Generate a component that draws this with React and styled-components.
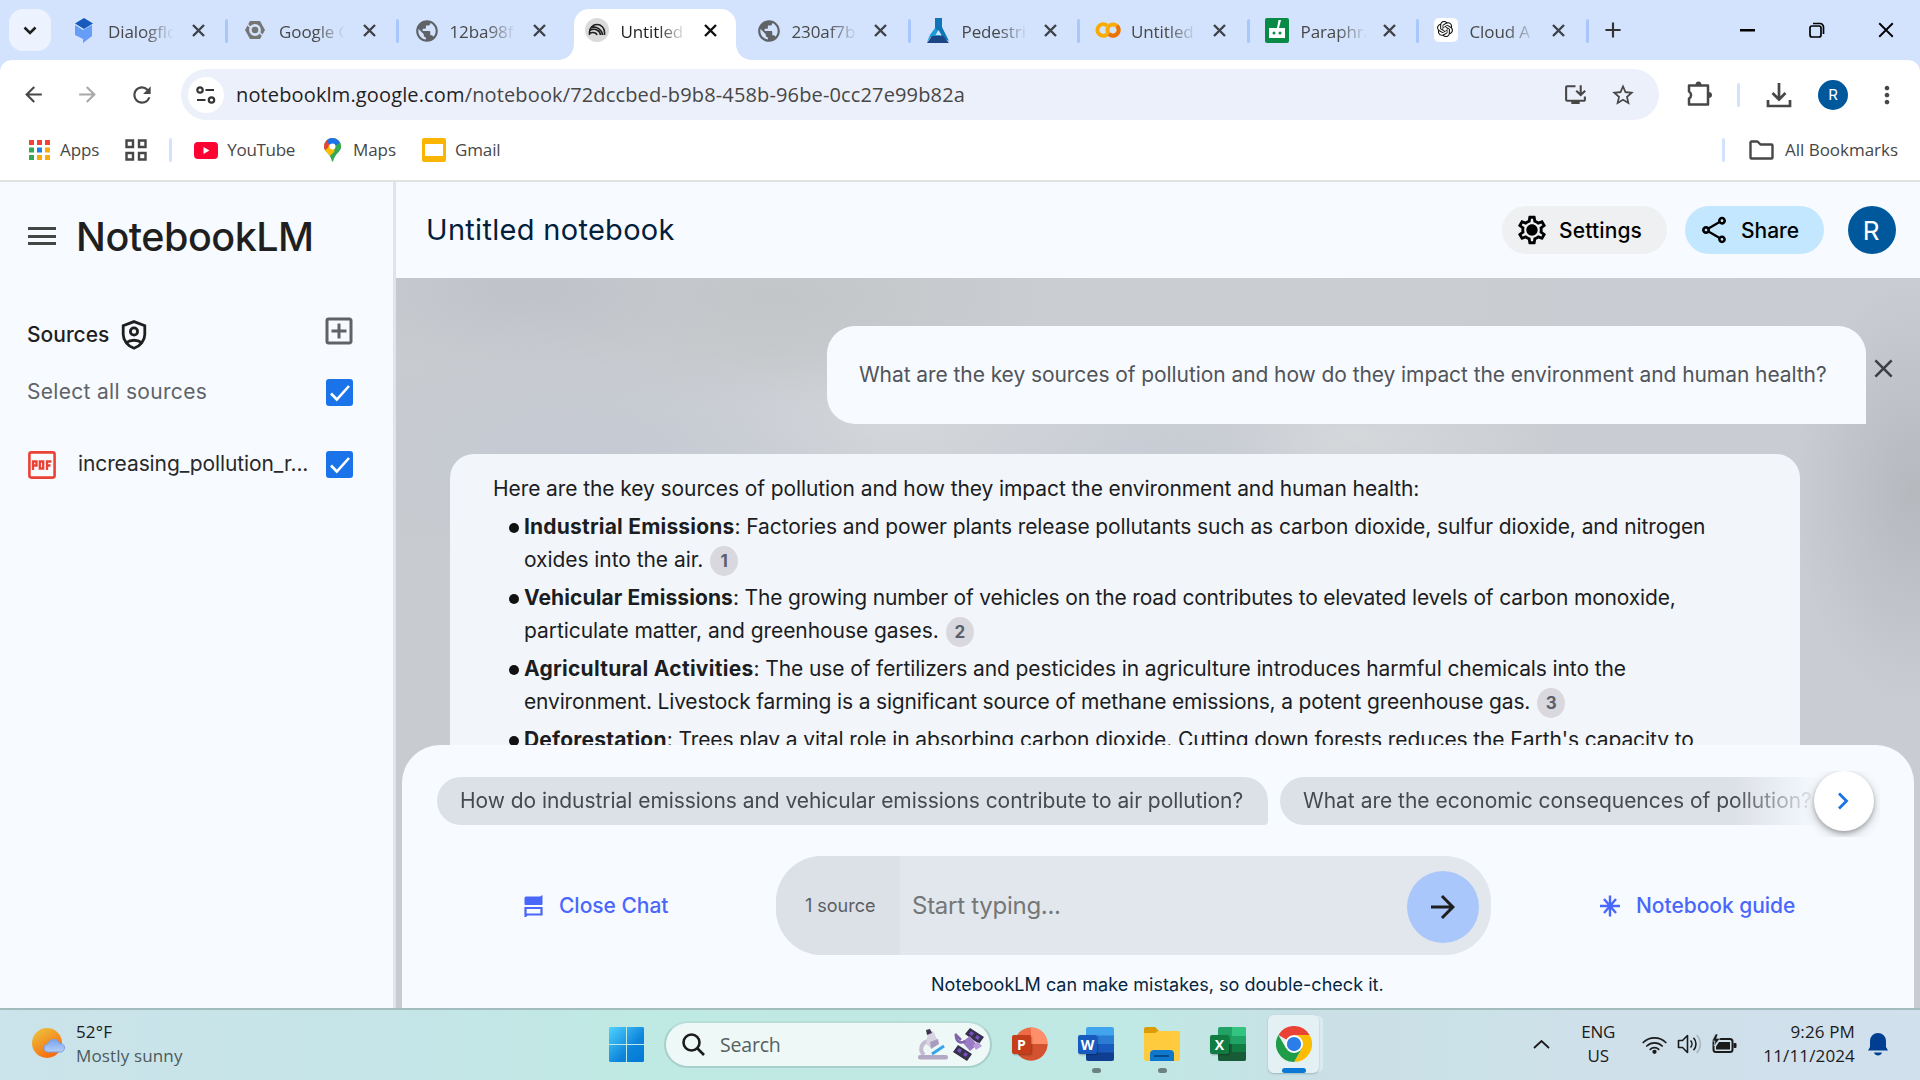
import React from "react";
import styled, { createGlobalStyle, css } from "styled-components";
import {
  MdClose, MdArrowBack, MdArrowForward, MdRefresh, MdStarBorder, MdMoreVert,
  MdInstallDesktop, MdPublic, MdOutlineSettings, MdOutlineAddBox,
  MdOutlineShare, MdAdd,
} from "react-icons/md";
import { SiOpenai } from "react-icons/si";

const ui = `"Open Sans", "Noto Sans", sans-serif`;
const product = `Inter, Roboto, "Liberation Sans", sans-serif`;

const GlobalStyle = createGlobalStyle`
  * { box-sizing: border-box; }
  html, body { margin: 0; padding: 0; overflow: hidden; }
  body { font-family: ${product}; color: #1f1f1f; }
  svg { display: block; flex: none; }
  p, h1, h2, ul { margin: 0; padding: 0; font-weight: 400; }
`;

const Screen = styled.div`
  width: 1920px;
  height: 1080px;
  display: flex;
  flex-direction: column;
  background: #d3e3fd;
  overflow: hidden;
`;

/* ---------- Tab strip ---------- */
const TabStrip = styled.div`
  display: flex;
  height: 60px;
  flex: none;
  padding-left: 9px;
  font-family: ${ui};
`;
const TabSearch = styled.button`
  width: 42px;
  height: 42px;
  margin: 9px 5px 0 0;
  border: 0;
  padding: 0;
  border-radius: 14px;
  background: #ecf3fe;
  display: grid;
  place-items: center;
`;
const Tab = styled.div`
  position: relative;
  flex: none;
  width: ${(p) => p.$w}px;
  height: 60px;
  display: flex;
  align-items: center;
  padding-left: 16px;
  color: ${(p) => (p.$active ? "#1f1f1f" : "#474747")};
  ${(p) =>
    p.$divider &&
    css`
      &::after {
        content: "";
        position: absolute;
        right: -1px;
        top: 19px;
        width: 3px;
        height: 24px;
        border-radius: 2px;
        background: #a8c7fa;
      }
    `}
`;
const ActiveShape = styled.div`
  position: absolute;
  left: 5px;
  right: 4px;
  top: 9px;
  bottom: 0;
  background: #fff;
  border-radius: 15px 15px 0 0;
  &::before,
  &::after {
    content: "";
    position: absolute;
    bottom: 0;
    width: 15px;
    height: 15px;
  }
  &::before {
    left: -15px;
    background: radial-gradient(circle at 0 0, transparent 14.5px, #fff 15px);
  }
  &::after {
    right: -15px;
    background: radial-gradient(circle at 100% 0, transparent 14.5px, #fff 15px);
  }
`;
const Favicon = styled.span`
  position: relative;
  width: 24px;
  height: 24px;
  display: grid;
  place-items: center;
`;
const TabTitle = styled.span`
  position: relative;
  width: 80px;
  margin: 2px 0 0 12px;
  white-space: nowrap;
  font-size: 17px;
  letter-spacing: -0.1px;
  mask-image: linear-gradient(90deg, #000 36px, transparent 66px);
`;
const TabClose = styled.span`
  position: relative;
  margin-left: ${(p) => (p.$wide ? 3.5 : 2)}px;
`;
const NewTab = styled.span`
  margin: 17px 0 0 12px;
  color: #333;
`;
const WindowControls = styled.div`
  margin-left: auto;
  height: 60px;
  display: flex;
  align-items: center;
  > * {
    width: 69px;
    display: grid;
    place-items: center;
  }
`;

/* ---------- Toolbar ---------- */
const Toolbar = styled.div`
  height: 60px;
  flex: none;
  display: flex;
  align-items: center;
  padding: 9px 19px 0 21px;
  border-radius: 12px 12px 0 0;
  background: #fff;
  color: #474747;
  font-family: ${ui};
`;
const NavButton = styled.span`
  flex: none;
  width: 24px;
  margin-right: 30px;
  color: ${(p) => (p.$dim ? "#a8a8a8" : "#474747")};
`;
const Omnibox = styled.div`
  flex: none;
  width: 1478px;
  height: 51px;
  margin-left: -2px;
  border-radius: 26px;
  background: #ecf0fa;
  display: flex;
  align-items: center;
  padding: 0 23px 0 7px;
`;
const SiteInfo = styled.span`
  width: 36px;
  height: 36px;
  border-radius: 50%;
  background: #fff;
  display: grid;
  place-items: center;
`;
const Url = styled.span`
  flex: 1;
  margin-left: 12px;
  font-size: 20px;
  letter-spacing: 0.14px;
  color: #474747;
  b {
    font-weight: 400;
    color: #1f1f1f;
  }
`;
const OmniIcon = styled.span`
  margin-left: 22px;
`;
const ToolbarEnd = styled.div`
  flex: 1;
  display: flex;
  align-items: center;
  justify-content: flex-end;
`;
const Divider = styled.span`
  width: 3px;
  height: 24px;
  border-radius: 2px;
  background: #d3e3fd;
  margin: 0 ${(p) => p.$r}px 0 ${(p) => p.$l}px;
`;
const ChromeAvatar = styled.span`
  width: 30px;
  height: 30px;
  margin: 0 25px 0 26px;
  border-radius: 50%;
  background: #00589c;
  color: #fff;
  font: 15px ${product};
  display: grid;
  place-items: center;
`;

/* ---------- Bookmarks ---------- */
const BookmarkBar = styled.div`
  height: 62px;
  flex: none;
  display: flex;
  align-items: center;
  padding: 0 22px 0 29px;
  border-bottom: 2px solid #e1e3e1;
  background: #fff;
  color: #474747;
  font-family: ${ui};
  font-size: 17px;
`;
const Bookmark = styled.span`
  display: flex;
  align-items: center;
  gap: ${(p) => p.$gap || 9}px;
  margin-right: ${(p) => p.$mr || 0}px;
  letter-spacing: ${(p) => p.$ls || -0.1}px;
  > span {
    margin-top: -2px;
  }
`;
const Grow = styled.span`
  flex: 1;
`;

/* ---------- App ---------- */
const AppBody = styled.div`
  display: flex;
  height: 826px;
  flex: none;
  background: #f7fbff;
`;
const Sidebar = styled.aside`
  width: 396px;
  flex: none;
  border-right: 3px solid #dfe4eb;
  padding: 0 40px 0 28px;
`;
const BrandRow = styled.div`
  height: 108px;
  display: flex;
  align-items: center;
`;
const Burger = styled.span`
  width: 28px;
  height: 18px;
  margin-right: 20px;
  display: flex;
  flex-direction: column;
  justify-content: space-between;
  i {
    height: 3px;
    background: #444746;
  }
`;
const Brand = styled.h1`
  padding-top: 1px;
  font-size: 39.5px;
  font-weight: 500;
  letter-spacing: -0.5px;
`;
const SourcesRow = styled.div`
  height: 86px;
  display: flex;
  align-items: center;
  justify-content: space-between;
  color: #5f6368;
  > svg {
    margin: -4px -4px 0 0;
  }
`;
const SourcesTitle = styled.h2`
  display: flex;
  align-items: center;
  gap: 12px;
  margin: 3px 0 0 -1px;
  font-size: 21px;
  font-weight: 500;
  letter-spacing: 0;
  color: #1f1f1f;
`;
const SourceRow = styled.label`
  height: 33px;
  margin-bottom: 39px;
  display: flex;
  align-items: center;
  justify-content: space-between;
  font-size: 21px;
`;
const SelectAll = styled.span`
  margin: -2px 0 0 -1px;
  letter-spacing: 0.3px;
  color: #5f6368;
`;
const FileName = styled.span`
  flex: 1;
  margin: -2px 0 0 22px;
  letter-spacing: -0.11px;
  color: #28292a;
`;
const CheckBox = styled.span`
  width: 27px;
  height: 27px;
  border-radius: 3px;
  background: #1a73e8;
  display: grid;
  place-items: center;
`;

const Main = styled.main`
  flex: 1;
  display: flex;
  flex-direction: column;
`;
const Header = styled.header`
  height: 96px;
  flex: none;
  display: flex;
  align-items: center;
  padding: 0 24px 0 30px;
`;
const NotebookTitle = styled.h2`
  flex: 1;
  padding-bottom: 1px;
  font-size: 29px;
  letter-spacing: 0.3px;
  color: #041e3c;
`;
const PillButton = styled.button`
  height: 48px;
  width: ${(p) => p.$w}px;
  margin-right: ${(p) => p.$mr}px;
  padding: 0 0 0 ${(p) => p.$pl}px;
  border: 0;
  border-radius: 24px;
  background: ${(p) => p.$bg};
  color: #000;
  display: flex;
  align-items: center;
  gap: ${(p) => p.$gap}px;
  font: 500 21px ${product};
  letter-spacing: ${(p) => p.$ls}px;
`;
const Avatar = styled.span`
  width: 48px;
  height: 48px;
  padding-right: 2px;
  border-radius: 50%;
  background: #00589c;
  color: #fff;
  font-size: 26px;
  display: grid;
  place-items: center;
`;

const ChatPanel = styled.section`
  height: 730px;
  display: flex;
  flex-direction: column;
  background:
    radial-gradient(ellipse 120px 210px at 1518px 215px, #b5b8bd 0%, rgba(181, 184, 189, 0) 100%),
    radial-gradient(ellipse 200px 90px at 130px 10px, #bfc2c9 0%, rgba(191, 194, 201, 0) 100%),
    radial-gradient(ellipse 260px 110px at 380px 20px, #c3c6c8 0%, rgba(195, 198, 200, 0) 100%),
    radial-gradient(ellipse 300px 110px at 190px 175px, #c5c9d3 0%, rgba(197, 201, 211, 0) 100%),
    radial-gradient(ellipse 330px 90px at 500px 150px, #d3d6da 0%, rgba(211, 214, 218, 0) 100%),
    radial-gradient(ellipse 200px 60px at 720px 165px, #c5c9d3 0%, rgba(197, 201, 211, 0) 100%),
    radial-gradient(ellipse 200px 60px at 960px 160px, #d5d8db 0%, rgba(213, 216, 219, 0) 100%),
    linear-gradient(90deg, #c8cbcf, #caced2 50%, #c9ccd2);
`;
const Conversation = styled.div`
  height: 467px;
  overflow: hidden;
  padding: 48px 0 0 54px;
`;
const QuestionRow = styled.div`
  display: flex;
  justify-content: flex-end;
  padding-right: 26px;
  margin-bottom: 30px;
  color: #3c4043;
  > svg {
    margin: 27px -5px 0 2px;
  }
`;
const Question = styled.p`
  width: 1039px;
  height: 98px;
  padding: 0 0 1px 32px;
  border-radius: 28px 28px 0 28px;
  background: #f7fbff;
  display: flex;
  align-items: center;
  font-size: 21px;
  letter-spacing: -0.075px;
  white-space: nowrap;
  color: #51545a;
`;
const Answer = styled.article`
  width: 1350px;
  padding: 18px 0 0 43px;
  border-radius: 24px 24px 0 0;
  background: #f2f6fb;
  font-size: 21px;
  line-height: 33px;
  letter-spacing: -0.09px;
  color: #1c1d1f;
  white-space: nowrap;
`;
const Bullets = styled.ul`
  list-style: none;
`;
const Bullet = styled.li`
  display: flex;
  margin-top: 5px;
  padding-left: 16px;
  &::before {
    content: "";
    flex: none;
    width: 10px;
    height: 10px;
    margin: 13px 5px 0 0;
    border-radius: 50%;
    background: #111;
  }
`;
const Line = styled.div`
  height: 33px;
  letter-spacing: ${(p) => p.$ls || -0.105}px;
  b {
    font-weight: 700;
    letter-spacing: ${(p) => p.$bls || 0.2}px;
  }
`;
const Cite = styled.span`
  display: inline-grid;
  place-items: center;
  vertical-align: middle;
  width: 28px;
  height: 30px;
  margin-left: 7px;
  border-radius: 50%;
  background: #d8d8de;
  color: #5b5e6b;
  font-size: 17px;
  font-weight: 700;
  line-height: 30px;
  letter-spacing: 0;
`;

/* ---------- Composer ---------- */
const Composer = styled.div`
  flex: 1;
  margin: 0 6px;
  padding: 26px 0 0 35px;
  border-radius: 38px 38px 0 0;
  background: #f7fbff;
`;
const SuggestionRow = styled.div`
  position: relative;
  width: 1443px;
  height: 66px;
  overflow: hidden;
  padding-top: 6px;
`;
const Suggestions = styled.div`
  display: flex;
  gap: 12px;
  mask-image: linear-gradient(90deg, #000 0, #000 1296px, rgba(0, 0, 0, 0) 1385px);
`;
const Suggestion = styled.button`
  flex: none;
  height: 48px;
  width: ${(p) => p.$w}px;
  padding: 0 0 1px 23px;
  border: 0;
  border-radius: 24px 24px 4px 24px;
  background: #dce0e7;
  color: #464a4f;
  text-align: left;
  white-space: nowrap;
  font: 21px ${product};
  letter-spacing: ${(p) => p.$ls}px;
`;
const NextButton = styled.button`
  position: absolute;
  right: 6px;
  top: 0;
  width: 60px;
  height: 60px;
  padding: 0 2px 0 0;
  border: 0;
  border-radius: 50%;
  background: #fff;
  display: grid;
  place-items: center;
  box-shadow: 0 2px 4px rgba(0, 0, 0, 0.25), 0 4px 12px rgba(0, 0, 0, 0.2);
`;
const InputRow = styled.div`
  margin-top: 19px;
  height: 99px;
  display: flex;
  align-items: center;
`;
const TextAction = styled.span`
  display: flex;
  align-items: center;
  gap: ${(p) => p.$gap}px;
  margin-left: ${(p) => p.$ml}px;
  width: ${(p) => p.$w}px;
  font-size: 21px;
  font-weight: 500;
  letter-spacing: -0.03px;
  white-space: nowrap;
  color: #4a67fb;
`;
const InputBox = styled.div`
  width: 715px;
  height: 99px;
  border-radius: 46px;
  overflow: hidden;
  background: #e2e6ed;
  display: flex;
  align-items: center;
`;
const SourceCount = styled.span`
  width: 124px;
  height: 99px;
  padding-left: 29px;
  background: #dce0e7;
  display: flex;
  align-items: center;
  font-size: 18px;
  letter-spacing: -0.02px;
  color: #5a5e63;
`;
const Placeholder = styled.span`
  flex: 1;
  margin: 0 0 0 12px;
  font-size: 24px;
  letter-spacing: -0.27px;
  color: #747775;
`;
const SendButton = styled.span`
  width: 72px;
  height: 72px;
  margin: 3px 12px 0 0;
  border-radius: 50%;
  background: #a9c7fa;
  color: #1f1f1f;
  display: grid;
  place-items: center;
`;
const Disclaimer = styled.p`
  margin: 19px 0 0 494px;
  font-size: 18px;
  letter-spacing: 0.03px;
  color: #06263f;
`;

/* ---------- Taskbar ---------- */
const Taskbar = styled.footer`
  height: 72px;
  flex: none;
  display: flex;
  align-items: center;
  padding-bottom: 2px;
  border-top: 2px solid #a2bcbe;
  background: linear-gradient(90deg, #cbe3ea 0, #c5e5e8 400px, #bfe9e3 640px, #c0e8e4 1150px, #cadfe6 1330px, #cbe2e8 1470px, #cfe0ea 1600px, #d0e0ed 1920px);
  font-family: ${ui};
  font-size: 17px;
  color: #1b1b1b;
`;
const Weather = styled.div`
  width: 577px;
  margin-left: 32px;
  display: flex;
  align-items: center;
  gap: 11px;
  line-height: 24px;
  letter-spacing: 0.15px;
  small {
    display: block;
    font-size: 17px;
    color: #4c5a5d;
  }
`;
const SearchBox = styled.div`
  width: 328px;
  height: 47px;
  margin: 1px 20px 0 20px;
  padding: 0 5px 0 16px;
  border: 2px solid #a9cfca;
  border-top-color: #b9ddd8;
  border-radius: 24px;
  background: #edf8f7;
  display: flex;
  align-items: center;
  font-size: 19.5px;
  letter-spacing: -0.2px;
  color: #55605f;
  > span {
    flex: 1;
    margin-left: 15px;
  }
`;
const Launcher = styled.div`
  position: relative;
  width: 66px;
  height: 70px;
  display: flex;
  align-items: center;
  &::after {
    content: "";
    display: ${(p) => (p.$running ? "block" : "none")};
    position: absolute;
    left: 14px;
    bottom: 6px;
    width: 9px;
    height: 5px;
    border-radius: 3px;
    background: #6d8382;
  }
`;
const ActiveApp = styled.div`
  position: relative;
  width: 51px;
  height: 58px;
  margin-left: -8px;
  border-radius: 6px;
  background: #e4f1f4;
  box-shadow: 0 1px 2px rgba(90, 120, 130, 0.4), 5px 0 0 -1px #dcebef;
  display: grid;
  place-items: center;
  &::after {
    content: "";
    position: absolute;
    left: 14px;
    bottom: 0;
    width: 24px;
    height: 5px;
    border-radius: 3px;
    background: #0a78d4;
  }
`;
const Tray = styled.div`
  flex: 1;
  display: flex;
  align-items: center;
  justify-content: flex-end;
  padding-right: 32px;
`;
const TrayIcons = styled.div`
  display: flex;
  align-items: center;
  gap: 10px;
`;
const TrayText = styled.div`
  text-align: ${(p) => p.$align};
  line-height: 24px;
  margin: 0 ${(p) => p.$r}px 0 ${(p) => p.$l}px;
  letter-spacing: ${(p) => p.$ls || 0}px;
`;

/* ---------- Icons ---------- */
const Cross = ({ s = 13, w = 2.4, c = "#3a3a3a" }) => (
  <svg width={s} height={s} viewBox="0 0 13 13"><path d="M1 1l11 11M12 1L1 12" stroke={c} strokeWidth={w} /></svg>
);
const Globe = () => <MdPublic size={26} color="#5f6368" />;
const Dialogflow = () => (
  <svg width="20" height="26" viewBox="0 0 20 26">
    <path d="M1 7v10l8 4v4l9-7V7l-9 5z" fill="#669df6" />
    <path d="M10 0l9 5.500-9 5.500-9-5.500z" fill="#185abc" />
  </svg>
);
const CloudHex = () => (
  <svg width="22" height="22" viewBox="0 0 22 22">
    <path d="M6 2h10l5 9-5 9H6l-5-9z" fill="#757575" />
    <circle cx="11" cy="11" r="4.600" fill="#757575" stroke="#d3e3fd" strokeWidth="2.600" />
    <path d="M3 5l4 4M19 17l-4-4" stroke="#d3e3fd" strokeWidth="1.500" />
  </svg>
);
const NotebookIcon = () => (
  <svg width="24" height="24" viewBox="0 0 24 24" fill="none" stroke="#1f1f1f" strokeWidth="1.600">
    <circle cx="12" cy="12" r="12" fill="#dadada" stroke="none" />
    <path d="M4.500 17v-3a7.500 7.500 0 0115 0v3M5 12.200c5-2.400 10 .2 10.500 4.800M5 15c3.800-1.300 6.500 0 7 2M6.500 9.500c5-1.500 10.500 2 11 7.500" />
  </svg>
);
const Flask = () => (
  <svg width="24" height="25" viewBox="0 0 24 25">
    <path d="M9 0h7v9l-4 4 3 6H5l-4 5 3-7 5-7z" fill="#1a9ad7" />
    <path d="M9 0h7v9l7 14-7-3-4-7-3-3z" fill="#0f74b8" />
    <path d="M9.500 17l3-5 3 5z" fill="#d3e3fd" />
    <path d="M6 18h11l6 7H1z" fill="#1c4585" />
  </svg>
);
const Colab = () => (
  <svg width="26" height="16" viewBox="0 0 26 16" fill="none" strokeWidth="4">
    <path d="M12 3.600A5.800 5.800 0 1012 12.400" stroke="#f9ab00" />
    <circle cx="18" cy="8" r="5.600" stroke="#f9ab00" />
    <path d="M14 12a5.600 5.600 0 008-8" stroke="#e8710a" />
  </svg>
);
const Robot = () => (
  <svg width="24" height="25" viewBox="0 0 24 25">
    <rect width="24" height="25" rx="2" fill="#0a8a47" />
    <path d="M12 10l1.500-8h2.500l-2 8h6v10H4V10z" fill="#fff" />
    <circle cx="9" cy="15" r="1.500" fill="#0a8a47" /><circle cx="15" cy="15" r="1.500" fill="#0a8a47" />
  </svg>
);
const OpenAi = () => (
  <svg width="24" height="24" viewBox="0 0 24 24">
    <rect width="24" height="24" rx="5" fill="#fff" />
    <SiOpenai x="3" y="3" width="18" height="18" color="#111" />
  </svg>
);
const Tune = () => (
  <svg width="20" height="20" viewBox="0 0 20 20" fill="none" stroke="#333" strokeWidth="2.200">
    <circle cx="4" cy="5" r="2.700" /><path d="M9.500 5H18M1 15h8.500" /><circle cx="15.500" cy="15" r="2.700" />
  </svg>
);
const Puzzle = () => (
  <svg width="28" height="28" viewBox="0 0 28 28" fill="none" stroke="#474747" strokeWidth="2.500" strokeLinejoin="round">
    <path d="M4 4.500h19v19H4v-6a4 4 0 000-7z" />
    <path d="M10.500 4a3 3.500 0 016 0zM23.500 11a3.500 3 0 010 6z" fill="#474747" stroke="none" />
  </svg>
);
const Download = () => (
  <svg width="26" height="26" viewBox="0 0 26 26" fill="none" stroke="#474747" strokeWidth="2.700">
    <path d="M13 1v16M6.500 11l6.500 6.500 6.500-6.500M2 18v6h22v-6" />
  </svg>
);
const AppsDots = () => (
  <svg width="21" height="20" viewBox="0 0 21 20">
    {["#f44336", "#f44336", "#f44336", "#34a853", "#1a82e2", "#fbab05", "#34a853", "#fbab05", "#fbab05"].map((c, i) => (
      <rect key={i} x={(i % 3) * 8} y={Math.floor(i / 3) * 7.5} width="5" height="5" fill={c} />
    ))}
  </svg>
);
const FourSquares = () => (
  <svg width="22" height="22" viewBox="0 0 22 22" fill="none" stroke="#474747" strokeWidth="2.400">
    <path d="M1.500 1.500h6.500v6.500H1.500zM14 1.500h6.500v6.500H14zM1.500 14h6.500v6.500H1.500zM14 14h6.500v6.500H14z" />
  </svg>
);
const YouTube = () => (
  <svg width="24" height="17" viewBox="0 0 24 17"><rect width="24" height="17" rx="4" fill="#ff0033" /><path d="M9.500 5l6 3.500-6 3.500z" fill="#fff" /></svg>
);
const MapsPin = () => (
  <svg width="17" height="24" viewBox="0 0 17 24">
    <clipPath id="pin"><path d="M8.500 0A8.300 8.300 0 000 8.400C0 14 6.500 15 8 23.500h1C10.500 15 17 14 17 8.400A8.300 8.300 0 008.500 0z" /></clipPath>
    <g clipPath="url(#pin)">
      <rect width="17" height="24" fill="#34a853" />
      <path d="M-2 14L12-4 20 4 4 20z" fill="#fbbc04" />
      <path d="M-1-1h8L4 10-2 14z" fill="#ea4335" />
      <path d="M3 0h10l4 5-7 6-7-7z" fill="#1a73e8" />
      <path d="M11 8L17 4v8l-8 12z" fill="#34a853" />
    </g>
    <circle cx="8.500" cy="8.500" r="3" fill="#fff" />
  </svg>
);
const Slides = () => (
  <svg width="24" height="24" viewBox="0 0 24 24"><rect width="24" height="24" rx="2" fill="#f9b500" /><path d="M3 6h18v12H3z" fill="#fff" /></svg>
);
const Folder = () => (
  <svg width="25" height="20" viewBox="0 0 25 20" fill="none" stroke="#474747" strokeWidth="2.400" strokeLinejoin="round">
    <path d="M1.500 2.500a1 1 0 011-1h6l3 3h11a1 1 0 011 1v12a1 1 0 01-1 1h-20a1 1 0 01-1-1z" />
  </svg>
);
const ShieldPerson = () => (
  <svg width="26" height="30" viewBox="0 0 26 30" fill="none" stroke="#1f1f1f" strokeWidth="2.800">
    <path d="M13 1.600l10.800 4v8.900c0 6-4.600 11.600-10.800 13.800C6.800 26.100 2.200 20.500 2.200 14.500V5.600z" />
    <circle cx="13" cy="11.500" r="3.600" /><path d="M5.500 22.500c4-3 11-3 15 0" />
  </svg>
);
const Pdf = () => (
  <svg width="28" height="28" viewBox="0 0 28 28" fill="none" stroke="#ea4335" strokeWidth="2.600">
    <rect x="1.400" y="1.400" width="25.200" height="25.200" rx="2" />
    <path strokeWidth="2.300" d="M5 19v-8.500h3.500v4H5M11.800 10.500h3.400v7h-3.400zM19 19v-8.500h4.500M19 14.500h3.500" />
  </svg>
);
const Check = () => (
  <svg width="22" height="20" viewBox="0 0 22 20" fill="none" stroke="#fff" strokeWidth="2.600"><path d="M2 10.500l5.800 6L20 3" /></svg>
);
const Gear = () => (
  <svg width="34" height="34" viewBox="0 0 34 34">
    <MdOutlineSettings width="34" height="34" size={34} />
    <circle cx="17" cy="17" r="5" />
  </svg>
);
const CloseChatIcon = () => (
  <svg width="19" height="22" viewBox="0 0 19 22">
    <path d="M3 1.500h13L18.500 0v9a1 1 0 01-1 1h-16a1 1 0 01-1-1V3a1.500 1.500 0 011.500-1.500z" fill="#4a67fb" />
    <path d="M1.500 13h16v6.500H3L1.500 21z" fill="none" stroke="#4a67fb" strokeWidth="2.200" />
  </svg>
);
const Asterisk = () => (
  <svg width="20" height="22" viewBox="0 0 20 22" stroke="#4a67fb" strokeWidth="2.400"><path d="M10 .5v21M0 11h20M4 4l12 14M16 4L4 18" /></svg>
);
const WeatherIcon = () => (
  <svg width="33" height="32" viewBox="0 0 33 32">
    <defs>
      <linearGradient id="sun" x1="0.200" y1="0" x2="0.800" y2="1"><stop offset="0" stopColor="#edc13c" /><stop offset="1" stopColor="#f8610a" /></linearGradient>
      <linearGradient id="cl" x1="0" y1="0" x2="0" y2="1"><stop offset="0" stopColor="#7aa4ee" /><stop offset="1" stopColor="#b5d0f8" /></linearGradient>
    </defs>
    <circle cx="15" cy="15" r="15" fill="url(#sun)" />
    <path d="M16 24a4 4 0 010-8 6 6 0 0111.500-.5A4.300 4.300 0 0129 24z" fill="url(#cl)" stroke="#7d9fe0" />
  </svg>
);
const WindowsLogo = () => (
  <svg width="35" height="35" viewBox="0 0 35 35">
    <defs><linearGradient id="win" x1="0" y1="0" x2="1" y2="1"><stop offset="0" stopColor="#4fd3ff" /><stop offset="0.600" stopColor="#0f86dc" /><stop offset="1" stopColor="#0078d4" /></linearGradient></defs>
    <path d="M1 0h16v17H0V1zM18 0h16l1 1v16H18zM0 18h17v17H1l-1-1zM18 18h17v16l-1 1H18z" fill="url(#win)" />
  </svg>
);
const Magnifier = () => (
  <svg width="23" height="23" viewBox="0 0 23 23" fill="none" stroke="#1b1b1b" strokeWidth="2.600"><circle cx="9.500" cy="9.500" r="8" /><path d="M15 15l7 7" /></svg>
);
const Microscope = () => (
  <svg width="30" height="31" viewBox="0 0 30 31" fill="none">
    <path d="M10 12C3 14 1 21 6 26" stroke="#c3bcd3" strokeWidth="4" />
    <path d="M10 3l5-1 6 12-8 5-5-4z" fill="#d8d3e2" /><path d="M12 13l8-3 1 5-8 5z" fill="#a99bbf" />
    <path d="M8 1l4-1 2 4-5 2z" fill="#3e3650" />
    <path d="M14 25L26 17" stroke="#38a4e8" strokeWidth="3" />
    <rect x="0" y="26" width="30" height="4.500" rx="2" fill="#b4a9c4" />
  </svg>
);
const Satellite = () => (
  <svg width="32" height="33" viewBox="0 0 32 33">
    <path d="M17 0l14 9-5 7L12 6zM5 17l14 9-5 7L0 24z" fill="#37304a" />
    <path d="M18 3l3 2-2 3-3-2zM24 7l3 2-2 3-3-2zM6 20l3 2-2 3-3-2zM12 24l3 2-2 3-3-2z" fill="#7451bd" />
    <path d="M9 14l8-6 7 9-7 6z" fill="#9b7bc6" /><path d="M20 17l5-3 4 4-6 4z" fill="#b99bdd" />
    <path d="M3 8c0 6 5 8 9 5M2 6l6 6" stroke="#7e63a8" strokeWidth="2.500" fill="none" />
  </svg>
);
const OfficeBadge = styled.span`
  position: absolute;
  left: 0;
  top: 26px;
  width: 19px;
  height: 19px;
  border-radius: 2px;
  background: ${(p) => p.$bg};
  color: #fff;
  font: 700 14px/19px ${ui};
  text-align: center;
  box-shadow: 1px 1px 2px rgba(0, 0, 0, 0.3);
`;
const PptArt = () => (
  <svg width="36" height="34" viewBox="0 0 36 34"><circle cx="19" cy="17" r="16.500" fill="#ed6c47" /><path d="M19 .5A16.500 16.500 0 0135.500 17H19z" fill="#ff8f6b" /><path d="M2.500 17h33a16.500 16.500 0 01-33 0z" fill="#d35230" /></svg>
);
const SheetArt = ({ colors }) => (
  <svg width="36" height="34" viewBox="0 0 36 34">
    <clipPath id="sheet"><rect x="8" y="0" width="28" height="34" rx="2" /></clipPath>
    <g clipPath="url(#sheet)">{colors.map((c, i) => <rect key={i} x="8" y={i * 8.5} width="28" height="9" fill={c} />)}</g>
  </svg>
);
const ExcelArt = () => (
  <svg width="36" height="34" viewBox="0 0 36 34">
    <rect x="8" y="0" width="28" height="34" rx="2" fill="#21a366" />
    <path d="M22 0h12a2 2 0 012 2v7H22z" fill="#33c481" /><path d="M8 17h14v8H8z" fill="#185c37" />
    <path d="M22 17h14v8H22z" fill="#107c41" /><path d="M8 25h28v7a2 2 0 01-2 2H10a2 2 0 01-2-2z" fill="#185c37" />
  </svg>
);
const Explorer = () => (
  <svg width="36" height="34" viewBox="0 0 36 34">
    <path d="M0 2a2 2 0 012-2h9l4 4v6H0z" fill="#dd9b04" />
    <path d="M0 6h11l3-2h22v28a2 2 0 01-2 2H2a2 2 0 01-2-2z" fill="#fecb3e" />
    <path d="M6 34V27a4 4 0 014-4h16a4 4 0 014 4v7z" fill="#0f78cc" /><path d="M10 29h15" stroke="#064a87" strokeWidth="2" />
  </svg>
);
const Chrome = () => (
  <svg width="36" height="36" viewBox="0 0 48 48">
    <path d="M24 24L3.200 12A24 24 0 0144.800 12z" fill="#ea4335" />
    <path d="M24 12h20.800A24 24 0 0124 48l10.400-18z" fill="#fbbc04" />
    <path d="M3.200 12A24 24 0 0024 48l10.400-18L24 24l-10.400 6z" fill="#1e9c48" />
    <circle cx="24" cy="24" r="12" fill="#fff" /><circle cx="24" cy="24" r="9.500" fill="#2b7de9" />
  </svg>
);
const Wifi = () => (
  <svg width="25" height="19" viewBox="0 0 25 19" fill="none" stroke="#1b1b1b" strokeWidth="1.700" strokeLinecap="round">
    <path d="M1.200 7.500a16 16 0 0122.600 0M4.800 11a11 11 0 0115.400 0M8.300 14.300a6 6 0 018.400 0" /><circle cx="12.500" cy="16.800" r="1.300" fill="#1b1b1b" />
  </svg>
);
const Volume = () => (
  <svg width="25" height="20" viewBox="0 0 25 20" fill="none" stroke="#1b1b1b" strokeWidth="1.600" strokeLinejoin="round">
    <path d="M1.500 6.500h4l5-5v17l-5-5h-4zM13.500 6.500a5 5 0 010 7M16.500 3.800a9 9 0 010 12.400" /><path d="M19.500 1a12.500 12.500 0 010 18" stroke="#a9b6bf" />
  </svg>
);
const Battery = () => (
  <svg width="25" height="20" viewBox="0 0 25 20">
    <rect x="1.500" y="5" width="19" height="13" rx="2.500" fill="none" stroke="#1b1b1b" strokeWidth="2" />
    <path d="M7 8h11v7.500H4v-3z" fill="#1b1b1b" /><rect x="21.500" y="9" width="3" height="5" rx="1" fill="#1b1b1b" />
    <path d="M3.500 0L0 7h3l-1 5 6-7.500H4.500L6 0z" fill="#1b1b1b" stroke="#d0e0ea" strokeWidth=".6" />
  </svg>
);
const Bell = () => (
  <svg width="20" height="23" viewBox="0 0 20 23" fill="#003e92"><path d="M10 0a8 8 0 018 8v6l2 3.500H0L2 14V8a8 8 0 018-8zM6 19.500h8c-1 4-7 4-8 0z" /></svg>
);

const tabs = [
  { w: 171, icon: <Dialogflow />, title: "Dialogflo", divider: true, wide: true },
  { w: 170.5, icon: <CloudHex />, title: "Google C", divider: true, wide: true },
  { w: 171, icon: <Globe />, title: "12ba98f", wide: true },
  { w: 171, icon: <NotebookIcon />, title: "Untitled", active: true, wide: true },
  { w: 170, icon: <Globe />, title: "230af7b", divider: true },
  { w: 169.5, icon: <Flask />, title: "Pedestri", divider: true },
  { w: 169.5, icon: <Colab />, title: "Untitled", divider: true },
  { w: 169, icon: <Robot />, title: "Paraphra", divider: true },
  { w: 170, icon: <OpenAi />, title: "Cloud A", divider: true },
];

export default function App() {
  return (
    <Screen>
      <GlobalStyle />
      <TabStrip>
        <TabSearch>
          <svg width="14" height="9" viewBox="0 0 14 9"><path d="M1.500 1.500L7 7l5.500-5.500" fill="none" stroke="#1f1f1f" strokeWidth="2.600" /></svg>
        </TabSearch>
        {tabs.map((t, i) => (
          <Tab key={i} $w={t.w} $active={t.active} $divider={t.divider}>
            {t.active && <ActiveShape />}
            <Favicon>{t.icon}</Favicon>
            <TabTitle>{t.title}</TabTitle>
            <TabClose $wide={t.wide}><Cross c={t.active ? "#111" : "#3f4246"} /></TabClose>
          </Tab>
        ))}
        <NewTab><MdAdd size={26} /></NewTab>
        <WindowControls>
          <span><svg width="15" height="3"><rect width="15" height="2.500" fill="#000" /></svg></span>
          <span>
            <svg width="16" height="16" viewBox="0 0 16 16" fill="none" stroke="#000" strokeWidth="1.700">
              <rect x="1" y="4" width="11" height="11" rx="2" /><path d="M4 1.500h7a3.500 3.500 0 013.500 3.500v7" />
            </svg>
          </span>
          <span><Cross s={16} w={1.5} c="#000" /></span>
        </WindowControls>
      </TabStrip>

      <Toolbar>
        <NavButton><MdArrowBack size={25} /></NavButton>
        <NavButton $dim><MdArrowForward size={25} /></NavButton>
        <NavButton><MdRefresh size={26} /></NavButton>
        <Omnibox>
          <SiteInfo><Tune /></SiteInfo>
          <Url><b>notebooklm.google.com</b>/notebook/72dccbed-b9b8-458b-96be-0cc27e99b82a</Url>
          <OmniIcon><MdInstallDesktop size={25} /></OmniIcon>
          <OmniIcon><MdStarBorder size={26} /></OmniIcon>
        </Omnibox>
        <ToolbarEnd>
          <Puzzle />
          <Divider $l={24} $r={26} />
          <Download />
          <ChromeAvatar>R</ChromeAvatar>
          <MdMoreVert size={28} />
        </ToolbarEnd>
      </Toolbar>

      <BookmarkBar>
        <Bookmark $gap={10} $mr={26} $ls={-0.1}><AppsDots /><span>Apps</span></Bookmark>
        <Bookmark $mr={22}><FourSquares /></Bookmark>
        <Divider $l={0} $r={22} />
        <Bookmark $mr={29} $ls={-0.3}><YouTube /><span>YouTube</span></Bookmark>
        <Bookmark $gap={12} $mr={26} $ls={-0.1}><MapsPin /><span>Maps</span></Bookmark>
        <Bookmark $ls={-0.1}><Slides /><span>Gmail</span></Bookmark>
        <Grow />
        <Divider $l={0} $r={24} />
        <Bookmark $gap={11} $ls={-0.03}><Folder /><span>All Bookmarks</span></Bookmark>
      </BookmarkBar>

      <AppBody>
        <Sidebar>
          <BrandRow>
            <Burger><i /><i /><i /></Burger>
            <Brand>NotebookLM</Brand>
          </BrandRow>
          <SourcesRow>
            <SourcesTitle>Sources <ShieldPerson /></SourcesTitle>
            <MdOutlineAddBox size={36} />
          </SourcesRow>
          <SourceRow><SelectAll>Select all sources</SelectAll><CheckBox><Check /></CheckBox></SourceRow>
          <SourceRow><Pdf /><FileName>increasing_pollution_r...</FileName><CheckBox><Check /></CheckBox></SourceRow>
        </Sidebar>

        <Main>
          <Header>
            <NotebookTitle>Untitled notebook</NotebookTitle>
            <PillButton $w={165} $mr={18} $pl={13} $gap={10} $ls={0.15} $bg="#eff0f2"><Gear />Settings</PillButton>
            <PillButton $w={139} $mr={24} $pl={13} $gap={11} $ls={0} $bg="#c2e7ff"><MdOutlineShare size={32} />Share</PillButton>
            <Avatar>R</Avatar>
          </Header>
          <ChatPanel>
            <Conversation>
              <QuestionRow>
                <Question>What are the key sources of pollution and how do they impact the environment and human health?</Question>
                <MdClose size={31} />
              </QuestionRow>
              <Answer>
                <p>Here are the key sources of pollution and how they impact the environment and human health:</p>
                <Bullets>
                  <Bullet>
                    <div>
                      <Line $ls={-0.1}><b>Industrial Emissions</b>: Factories and power plants release pollutants such as carbon dioxide, sulfur dioxide, and nitrogen</Line>
                      <Line $ls={-0.06}>oxides into the air.<Cite>1</Cite></Line>
                    </div>
                  </Bullet>
                  <Bullet>
                    <div>
                      <Line $ls={-0.175} $bls={0.1}><b>Vehicular Emissions</b>: The growing number of vehicles on the road contributes to elevated levels of carbon monoxide,</Line>
                      <Line $ls={-0.06}>particulate matter, and greenhouse gases.<Cite>2</Cite></Line>
                    </div>
                  </Bullet>
                  <Bullet>
                    <div>
                      <Line $bls={0.28}><b>Agricultural Activities</b>: The use of fertilizers and pesticides in agriculture introduces harmful chemicals into the</Line>
                      <Line $ls={-0.165}>environment. Livestock farming is a significant source of methane emissions, a potent greenhouse gas.<Cite>3</Cite></Line>
                    </div>
                  </Bullet>
                  <Bullet>
                    <div>
                      <Line><b>Deforestation</b>: Trees play a vital role in absorbing carbon dioxide. Cutting down forests reduces the Earth's capacity to</Line>
                    </div>
                  </Bullet>
                </Bullets>
              </Answer>
            </Conversation>
            <Composer>
              <SuggestionRow>
                <Suggestions>
                  <Suggestion $w={831} $ls={-0.05}>How do industrial emissions and vehicular emissions contribute to air pollution?</Suggestion>
                  <Suggestion $w={553} $ls={-0.01}>What are the economic consequences of pollution?</Suggestion>
                </Suggestions>
                <NextButton>
                  <svg width="12" height="18" viewBox="0 0 12 18"><path d="M2 1.500L9.500 9 2 16.500" fill="none" stroke="#1a73e8" strokeWidth="2.800" /></svg>
                </NextButton>
              </SuggestionRow>
              <InputRow>
                <TextAction $ml={87} $w={252} $gap={16}><CloseChatIcon />Close Chat</TextAction>
                <InputBox>
                  <SourceCount>1 source</SourceCount>
                  <Placeholder>Start typing...</Placeholder>
                  <SendButton><MdArrowForward size={36} /></SendButton>
                </InputBox>
                <TextAction $ml={109} $w={200} $gap={16}><Asterisk />Notebook guide</TextAction>
              </InputRow>
              <Disclaimer>NotebookLM can make mistakes, so double-check it.</Disclaimer>
            </Composer>
          </ChatPanel>
        </Main>
      </AppBody>

      <Taskbar>
        <Weather><WeatherIcon /><div>52°F<small>Mostly sunny</small></div></Weather>
        <WindowsLogo />
        <SearchBox><Magnifier /><span>Search</span><Microscope />&nbsp;<Satellite /></SearchBox>
        <Launcher><PptArt /><OfficeBadge $bg="#c43e1c">P</OfficeBadge></Launcher>
        <Launcher $running><SheetArt colors={["#41a5ee", "#2b7cd3", "#185abd", "#103f91"]} /><OfficeBadge $bg="#185abd">W</OfficeBadge></Launcher>
        <Launcher $running><Explorer /></Launcher>
        <Launcher><ExcelArt /><OfficeBadge $bg="#107c41">X</OfficeBadge></Launcher>
        <ActiveApp><Chrome /></ActiveApp>
        <Tray>
          <svg width="17" height="9" viewBox="0 0 17 9"><path d="M1 8l7.500-7L16 8" fill="none" stroke="#1b1b1b" strokeWidth="1.800" /></svg>
          <TrayText $align="center" $l={31} $r={27} $ls={-0.2}>ENG<br />US</TrayText>
          <TrayIcons><Wifi /><Volume /><Battery /></TrayIcons>
          <TrayText $align="right" $l={26} $r={13} $ls={0.15}>9:26 PM<br />11/11/2024</TrayText>
          <Bell />
        </Tray>
      </Taskbar>
    </Screen>
  );
}
